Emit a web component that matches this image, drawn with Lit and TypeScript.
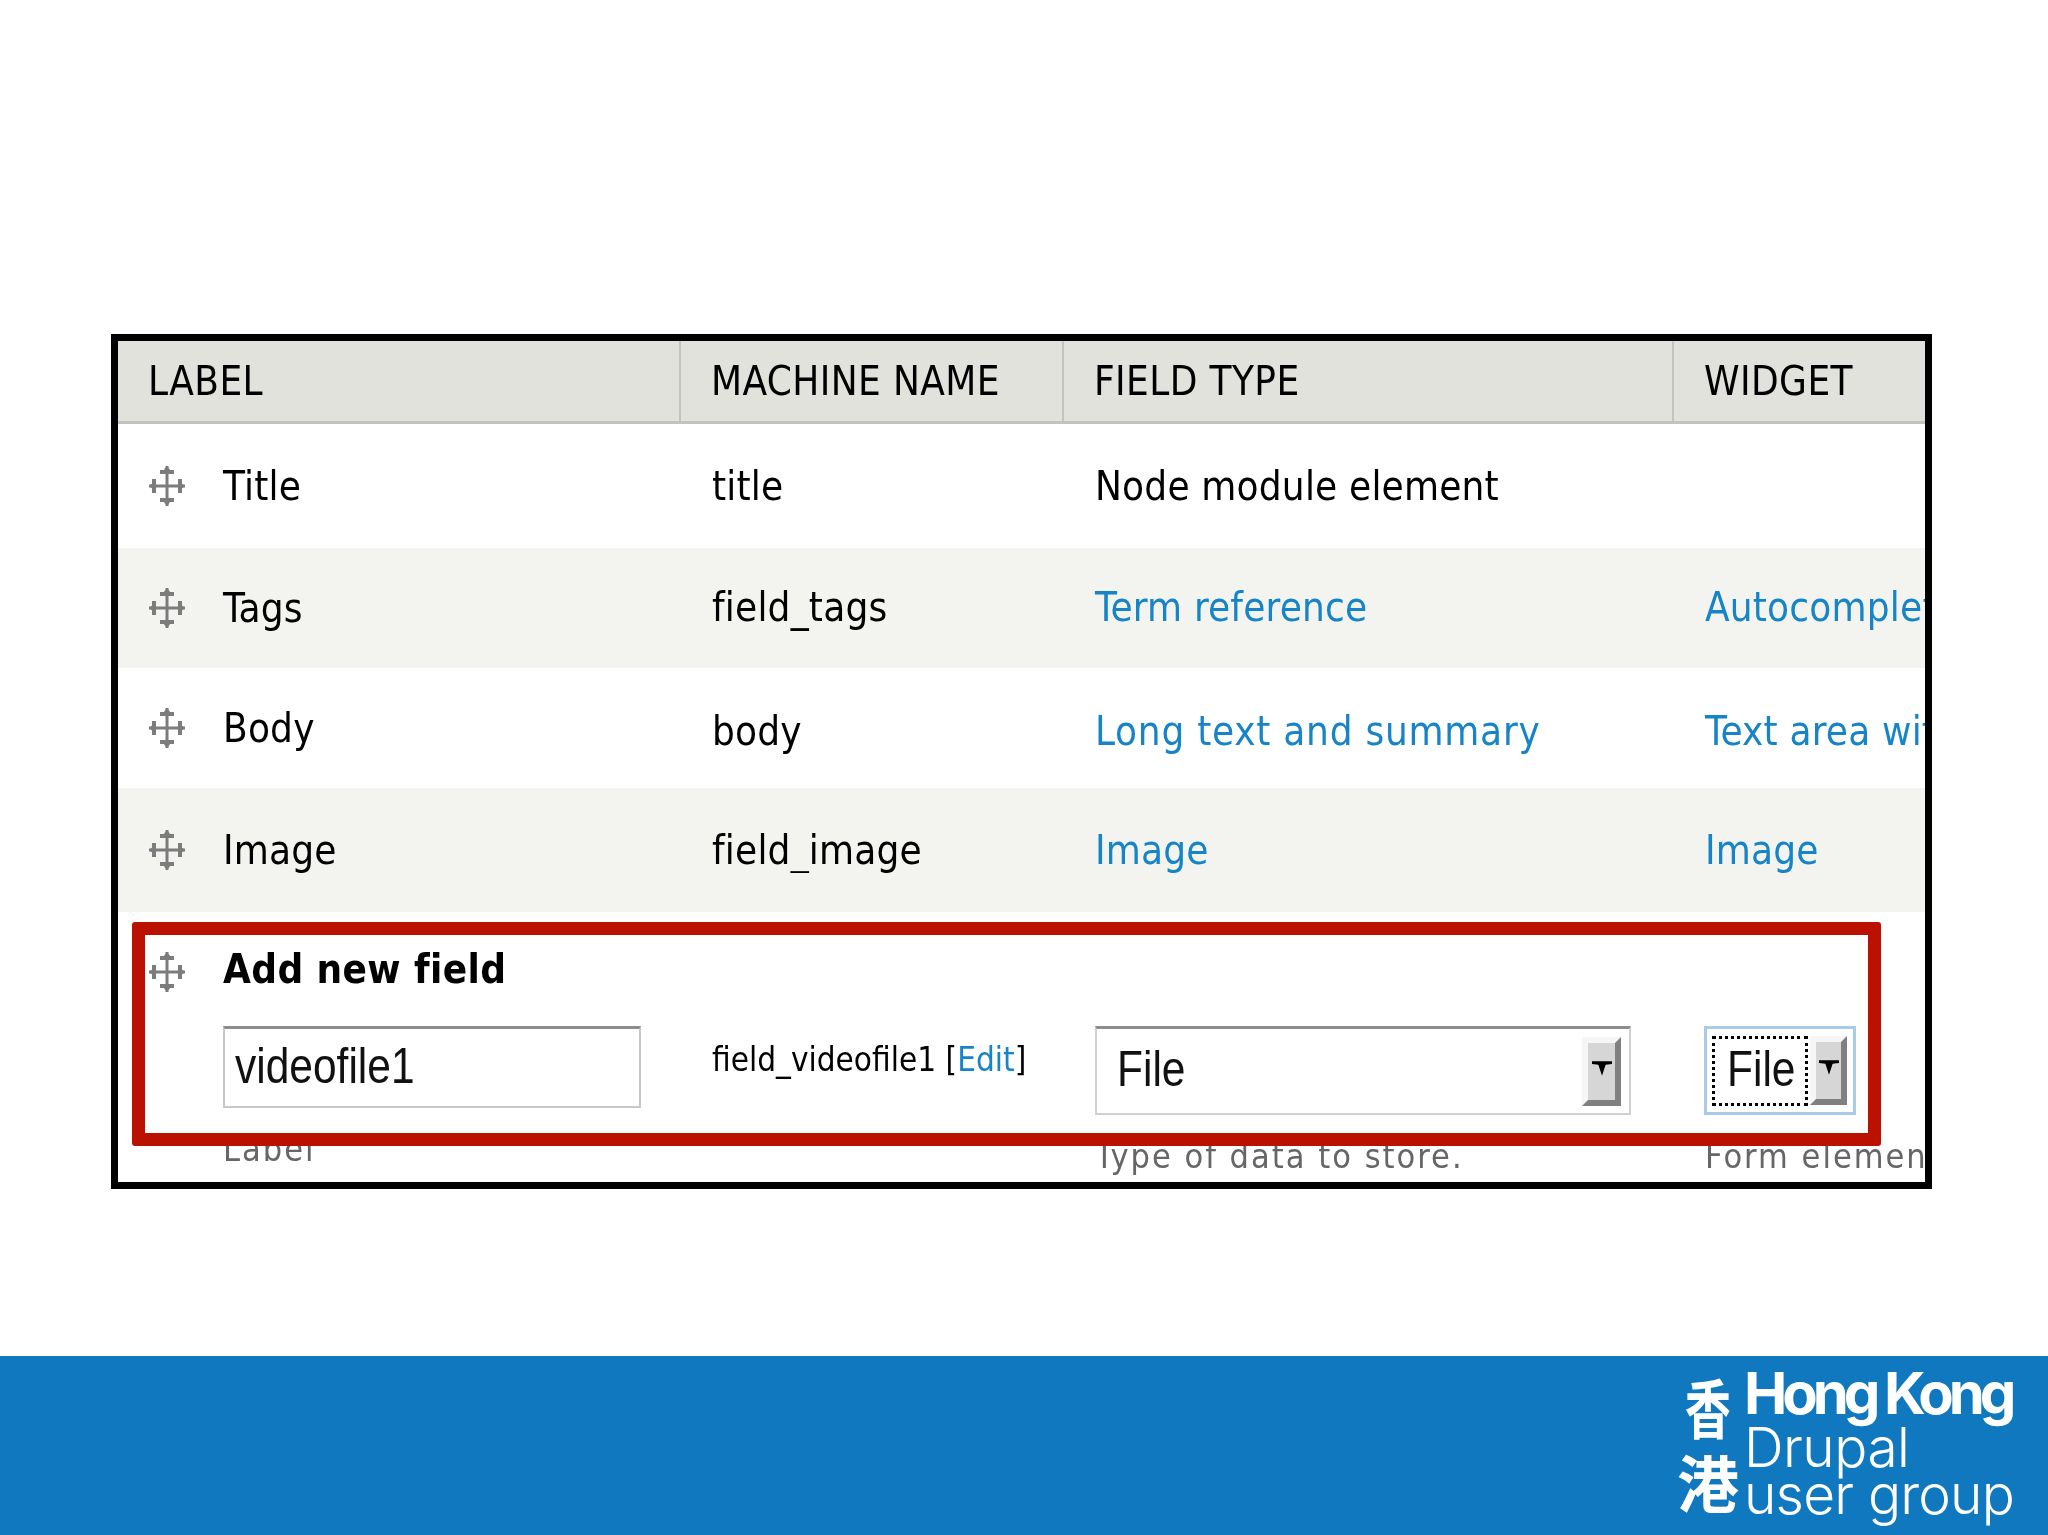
import { LitElement, html, css, svg } from "lit";
import { customElement } from "lit/decorators.js";

const handle = html`<svg class="handle" width="38" height="42" viewBox="0 0 38 42">
  ${svg`<path d="M1 21H37M19 1V41" stroke="#7c7c7c" stroke-width="3" fill="none"/>
  <path d="M6 14V28M32 14V28M12 7H26M12 35H26" stroke="#7c7c7c" stroke-width="4" fill="none"/>
  <path d="M1 21L6 17V25ZM37 21L32 17V25ZM19 1L15 6H23ZM19 41L15 36H23Z" fill="#7c7c7c"/>`}
</svg>`;

const arrow = html`<svg class="arrow" width="20" height="17" viewBox="0 0 22 18">
  ${svg`<path d="M0 1H22V4L15 5 11 17 7 5 0 4Z" fill="#000"/>`}
</svg>`;

@customElement("app-root")
export class AppRoot extends LitElement {
  static styles = css`
    :host { display: block; height: 1535px; background: #fff; }
    .page { height: 1535px; display: flex; flex-direction: column; padding-top: 334px; box-sizing: border-box; }
    .frame {
      position: relative; box-sizing: border-box; width: 1821px; height: 855px; margin-left: 111px;
      border: 7px solid #000; background: #fff; overflow: hidden;
      font-family: "DejaVu Sans Condensed", "DejaVu Sans", sans-serif; font-stretch: condensed;
      font-size: 40px; color: #000; letter-spacing: 0.2px;
    }
    .blur { filter: blur(0.7px); }
    .row { display: grid; grid-template-columns: 563px 383px 610px 1fr; align-items: center; white-space: nowrap; }
    .row > * { min-width: 0; overflow: hidden; }
    .head { height: 83px; background: #e1e2dc; border-bottom: 3px solid #c4c4bf; box-sizing: border-box; align-items: stretch; letter-spacing: 0.4px; }
    .head > div { display: flex; align-items: center; padding-left: 30px; border-right: 2px solid #c4c4bf; box-sizing: border-box; }
    .head > div:last-child { border-right: 0; }
    .r1 { height: 124px; }
    .r2 { height: 120px; }
    .even { background: #f3f4ef; }
    .lab { display: flex; align-items: center; gap: 37px; padding-left: 30px; }
    .c { padding-left: 31px; }
    .up .c { padding-bottom: 3px; }
    .down .c { padding-top: 5px; }
    .wide { letter-spacing: 0.75px; }
    a { color: #1784c7; text-decoration: none; }
    .add { height: 114px; align-items: start; }
    .add .lab { margin-top: 37px; font-weight: 700; letter-spacing: 0.4px; overflow: visible; }
    .add .lab span { position: relative; top: -3px; }
    .ctl { align-items: start; }
    .stack { padding-left: 105px; }
    .input {
      box-sizing: border-box; width: 418px; height: 82px; border: 2px solid #c8c8c8; border-top: 3px solid #8c8c8c;
      padding: 0 10px 4px; display: flex; align-items: center; background: #fff;
    }
    .sans { font-family: "Liberation Sans", sans-serif; font-stretch: normal; font-size: 50px; color: #111; letter-spacing: 0; display: inline-block; transform: scaleX(0.85); transform-origin: left center; }
    .machine { font-size: 33px; padding-top: 14px; line-height: 40px; padding-left: 31px; letter-spacing: 0; overflow: visible !important; }
    .desc { font-size: 34px; color: #666; margin-top: 20px; line-height: 42px; letter-spacing: 2px; }
    .desc.l { margin-top: 20px; }
    .sel { box-sizing: border-box; height: 89px; display: flex; align-items: center; background: #fff; border: 2px solid #d0d0d0; border-top: 3px solid #8c8c8c; }
    .sel.big { width: 536px; margin-left: 31px; padding: 0 8px 0 20px; justify-content: space-between; }
    .sel.small { width: 152px; margin-left: 30px; border: 3px solid #a9cbe9; padding: 0 6px 0 5px; justify-content: space-between; }
    .sel .sans { position: relative; top: -2px; }
    .focus { box-sizing: border-box; width: 96px; height: 70px; border: 3px dotted #000; display: flex; align-items: center; padding-left: 12px; overflow: hidden; }
    .btn { box-sizing: border-box; width: 39px; height: 69px; background: #d6d6d6; border: 6px solid; border-color: #f6f6f6 #808080 #808080 #f6f6f6; display: flex; align-items: center; justify-content: center; }
    .small .btn { width: 37px; }
    .arrow { margin-top: -6px; flex: none; }
    .desccol { padding-left: 0; }
    .desccol .desc { padding-left: 31px; margin-top: 20px; }
    .red { position: absolute; left: 14px; top: 581px; width: 1749px; height: 224px; box-sizing: border-box; border: 13px solid #bb1100; border-radius: 3px; }
    .foot { margin-top: auto; height: 179px; background: #1078bf; display: flex; justify-content: flex-end; color: #fff; }
    .logo { display: flex; padding: 5px 34px 0 0; gap: 4px; }
    .cjk { display: flex; flex-direction: column; align-items: center; width: 64px; margin-top: 6px; font-family: "Noto Sans CJK TC", sans-serif; font-weight: 700; font-size: 62px; line-height: 76px; }
    .cjk span:first-child { transform: scale(0.74, 1.02); }
    .names { font-family: Inter, "Open Sans", sans-serif; display: flex; flex-direction: column; }
    .hk { font-size: 58px; font-weight: 700; letter-spacing: -5.1px; line-height: 64px; }
    .dr { font-size: 55px; font-weight: 300; line-height: 44px; letter-spacing: -0.5px; }
    .ug { font-size: 55px; font-weight: 300; line-height: 50px; letter-spacing: -0.8px; }
  `;

  row(label: string, machine: string, type: unknown, widget: unknown, cls: string) {
    return html`<div class="row ${cls}">
      <div class="lab">${handle}<span>${label}</span></div>
      <div class="c">${machine}</div>
      <div class="c">${type}</div>
      <div class="c">${widget}</div>
    </div>`;
  }

  render() {
    return html`<div class="page">
      <div class="frame">
        <div class="blur">
          <div class="row head"><div>LABEL</div><div>MACHINE NAME</div><div>FIELD TYPE</div><div>WIDGET</div></div>
          ${this.row("Title", "title", "Node module element", "", "r1")}
          ${this.row("Tags", "field_tags", html`<a>Term reference</a>`, html`<a>Autocomplete</a>`, "r2 even up")}
          ${this.row("Body", "body", html`<a class="wide">Long text and summary</a>`, html`<a>Text area with a summary</a>`, "r2 down")}
          ${this.row("Image", "field_image", html`<a>Image</a>`, html`<a>Image</a>`, "r1 even")}
          <div class="row add">
            <div class="lab">${handle}<span>Add new field</span></div>
          </div>
          <div class="row ctl">
            <div class="stack">
              <div class="input"><span class="sans">videofile1</span></div>
              <div class="desc l">Label</div>
            </div>
            <div class="machine">field_videofile1 [<a>Edit</a>]</div>
            <div class="desccol">
              <div class="sel big"><span class="sans">File</span><div class="btn">${arrow}</div></div>
              <div class="desc">Type of data to store.</div>
            </div>
            <div class="desccol">
              <div class="sel small"><div class="focus"><span class="sans">File</span></div><div class="btn">${arrow}</div></div>
              <div class="desc">Form element to edit the data.</div>
            </div>
          </div>
        </div>
        <div class="red"></div>
      </div>
      <div class="foot">
        <div class="logo">
          <div class="cjk"><span>香</span><span>港</span></div>
          <div class="names">
            <div class="hk">Hong Kong</div>
            <div class="dr">Drupal</div>
            <div class="ug">user group</div>
          </div>
        </div>
      </div>
    </div>`;
  }
}
